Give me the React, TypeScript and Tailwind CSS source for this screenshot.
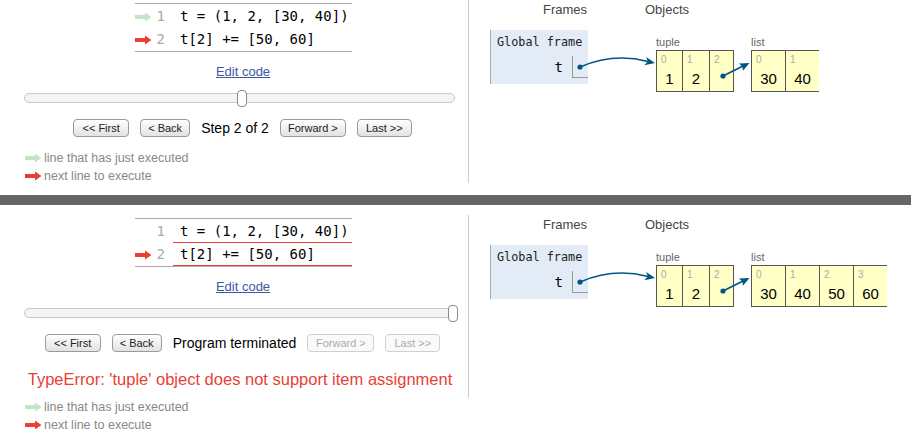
import React from "react";

const SANS = "font-['Liberation_Sans',Arial,sans-serif]";
const MONO = "font-['DejaVu_Sans_Mono',monospace]";

const GREEN = "#c5e4c6";
const RED = "#e93f34";
const PTR = "#005583";

const Arrow = ({ color }: { color: string }) => (
  <svg width="17" height="10" viewBox="0 0 17 10">
    <path d="M0 3h10V0.5L16.5 5 10 9.5V7H0z" fill={color} />
  </svg>
);

type Row = { n: number; code: string; arrow?: string; err?: boolean };

const CodeRow = ({ n, code, arrow, err }: Row) => (
  <div className="flex h-[23px] items-center">
    <div className="flex w-[17px] items-center">{arrow && <Arrow color={arrow} />}</div>
    <div className="w-[21px] pr-[8px] text-right text-[#aaa]">{n}</div>
    <div
      className={`flex h-full flex-1 items-center border-b pl-[7px] text-black ${
        err ? "border-[#e93f34]" : "border-transparent"
      }`}
    >
      {code}
    </div>
  </div>
);

const Btn = ({ label, w, off }: { label: string; w: string; off?: boolean }) => (
  <button
    className={`h-[18px] ${w} rounded-[4px] border text-[11px] leading-none ${
      off
        ? "border-[#cfcfcf] bg-[#fafafa] text-[#aaa]"
        : "border-[#9a9a9a] bg-linear-to-b from-white to-[#e2e2e2] text-[#222]"
    }`}
  >
    {label}
  </button>
);

const Legend = () => (
  <>
    <div className="ml-[25px] flex h-[18px] items-center gap-[2px] text-[12.5px] text-[#888]">
      <Arrow color={GREEN} />
      <span>line that has just executed</span>
    </div>
    <div className="ml-[25px] flex h-[18px] items-center gap-[2px] text-[12.5px] text-[#888]">
      <Arrow color={RED} />
      <span>next line to execute</span>
    </div>
  </>
);

const Cell = ({ i, v, w, first }: { i: number; v?: string; w: string; first?: boolean }) => (
  <div className={`flex h-[40px] ${w} flex-col ${first ? "" : "border-l border-[#555]"}`}>
    <div className="h-[14px] pl-[4px] pt-[3px] text-[10px] leading-[12px] text-[#aaa]">{i}</div>
    <div className="flex flex-1 items-center justify-center pt-[2px] text-[15px] text-black">{v}</div>
  </div>
);

function Viz({ items }: { items: string[] }) {
  return (
    <div className="relative h-[183px] flex-1 border-l border-[#cccccc]">
      <div className="flex">
        <div className="ml-[21px] w-[98px]">
          <div className="h-[20px] pr-[1px] text-right text-[13px] leading-[20px] text-[#444]">Frames</div>
          <div className="mt-[10px] border-l border-[#aaa] bg-[#e2ebf6] pb-[6px] pt-[5px]">
            <div className={`${MONO} pl-[6px] text-[11.8px] leading-[14px] text-[#222]`}>Global frame</div>
            <div className="mt-[7px] flex items-center justify-end">
              <span className={`${MONO} mr-[9px] text-[14px] text-black`}>t</span>
              <div className="h-[22px] w-[16px] border-b border-l border-[#999]" />
            </div>
          </div>
        </div>
        <div className="ml-[57px]">
          <div className="h-[20px] text-[13px] leading-[20px] text-[#444]">Objects</div>
          <div className="ml-[11px] mt-[16px] flex items-start">
            <div>
              <div className="h-[14px] text-[11px] leading-[12px] text-[#666]">tuple</div>
              <div className="flex border border-[#555] bg-[#ffffc6]">
                <Cell i={0} v="1" w="w-[25px]" first />
                <Cell i={1} v="2" w="w-[27px]" />
                <Cell i={2} w="w-[24px]" />
              </div>
            </div>
            <div className="ml-[17px]">
              <div className="h-[14px] text-[11px] leading-[12px] text-[#666]">list</div>
              <div className="flex border-b border-t border-[#555] bg-[#ffffc6]">
                {items.map((v, i) => (
                  <div key={i} className="border-l border-[#555]">
                    <Cell i={i} v={v} w="w-[33px]" first />
                  </div>
                ))}
              </div>
            </div>
          </div>
        </div>
      </div>
      <svg className="pointer-events-none absolute inset-0" width="442" height="183">
        <circle cx="111" cy="67" r="2.6" fill={PTR} />
        <path d="M111 67C134 57 158 56 179 61.5" fill="none" stroke={PTR} strokeWidth="1.6" />
        <polygon points="186,63 175.3,65.3 178.8,61.6 177.2,57" fill={PTR} />
        <circle cx="254" cy="76" r="2.6" fill={PTR} />
        <path d="M254 76L275 65.5" fill="none" stroke={PTR} strokeWidth="1.6" />
        <polygon points="280.5,63 273.9,70.8 273.4,66.4 269.9,63.4" fill={PTR} />
      </svg>
    </div>
  );
}

function Panel({ done }: { done?: boolean }) {
  return (
    <div className={`flex ${SANS}`}>
      <div className="w-[468px]">
        <div className={`${MONO} ml-[135px] mt-[3px] w-[217px] border-b border-t border-[#aaa] pt-[1px] text-[14px]`}>
          <CodeRow n={1} code="t = (1, 2, [30, 40])" arrow={done ? undefined : GREEN} err={done} />
          <CodeRow n={2} code="t[2] += [50, 60]" arrow={RED} err={done} />
        </div>
        <div className="mt-[12px] pl-[18px] text-center text-[13px] leading-[16px]">
          <a className="text-[#3d58a2] underline">Edit code</a>
        </div>
        <div className="relative ml-[24px] mt-[13px] h-[10px] w-[431px] rounded-full border border-[#c8c8c8] bg-[#f4f4f4]">
          <div
            className={`absolute top-[-4px] h-[17px] w-[10px] rounded-[4px] border border-[#8a8a8a] bg-white ${
              done ? "left-[423px]" : "left-[212px]"
            }`}
          />
        </div>
        <div className="mt-[16px] flex items-center justify-center gap-[11px] pl-[17px]">
          <Btn label="<< First" w="w-[56px]" />
          <Btn label="< Back" w="w-[50px]" />
          <span className="text-[14px] leading-[18px] text-black">{done ? "Program terminated" : "Step 2 of 2"}</span>
          <Btn label="Forward >" w={done ? "w-[67px]" : "w-[66px]"} off={done} />
          <Btn label="Last >>" w="w-[55px]" off={done} />
        </div>
        {done ? (
          <>
            <div className="mt-[17px] pl-[12px] text-center text-[16.5px] leading-[20px] text-[#e93f34]">
              TypeError: 'tuple' object does not support item assignment
            </div>
            <div className="mt-[9px]">
              <Legend />
            </div>
          </>
        ) : (
          <div className="mt-[12px]">
            <Legend />
          </div>
        )}
      </div>
      <Viz items={done ? ["30", "40", "50", "60"] : ["30", "40"]} />
    </div>
  );
}

export default function App() {
  return (
    <div className="h-[429px] w-[911px] overflow-hidden bg-white">
      <div className="h-[195px]">
        <Panel />
      </div>
      <div className="h-[10px] bg-[#666]" />
      <div className="pt-[10px]">
        <Panel done />
      </div>
    </div>
  );
}
